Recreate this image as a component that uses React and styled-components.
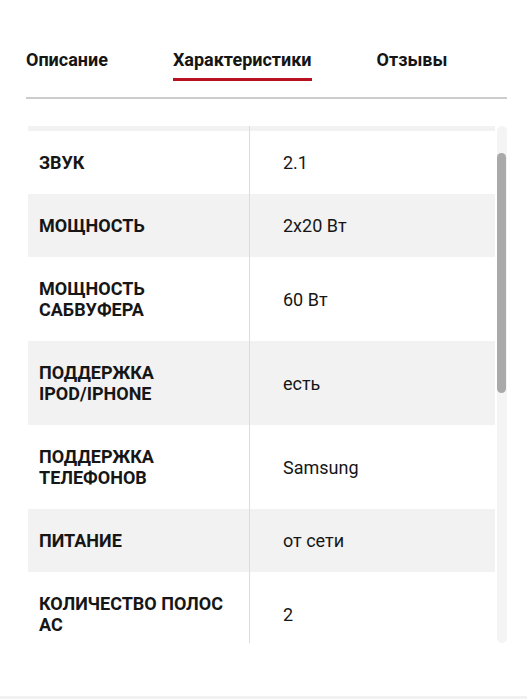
import React, { useEffect, useRef, useState } from "react";
import styled, { createGlobalStyle } from "styled-components";

const GlobalStyle = createGlobalStyle`
  html, body {
    margin: 0;
    padding: 0;
    background: #fff;
  }
  body {
    font-family: Roboto, "Liberation Sans", Arial, sans-serif;
    color: #161616;
  }
`;

const Page = styled.div`
  width: 527px;
  height: 699px;
  display: flex;
  flex-direction: column;
  overflow: hidden;
`;

const Content = styled.div`
  flex: 1;
  padding: 49px 20px 0 26px;
`;

const Tabs = styled.div`
  display: flex;
  gap: 65px;
  border-bottom: 2px solid #cccccc;
  padding-bottom: 16px;
`;

const Tab = styled.div`
  font-size: 18px;
  font-weight: 700;
  line-height: 21px;
  padding-bottom: 8px;
  border-bottom: 3px solid ${(p) => (p.$active ? "#b8111f" : "transparent")};
  color: #151515;
`;

const Body = styled.div`
  margin: 27px 0 0 2px;
  height: 517px;
  display: flex;
  gap: 2px;
`;

const Scroller = styled.div`
  flex: 1;
  overflow-y: scroll;
  scrollbar-width: none;
  &::-webkit-scrollbar {
    display: none;
  }
`;

const Track = styled.div`
  width: 10px;
  background: #f4f4f4;
  border-radius: 5px;
  display: flex;
  flex-direction: column;
`;

const Thumb = styled.div`
  width: 9px;
  background: #a9a9a9;
  border-radius: 5px;
`;

const Table = styled.div`
  display: flex;
  flex-direction: column;
`;

const Row = styled.div`
  display: grid;
  grid-template-columns: 222px 1fr;
  background: ${(p) => (p.$shaded ? "#f2f2f2" : "#ffffff")};
`;

const Label = styled.div`
  padding: 21px 18px 21px 11px;
  font-size: 18px;
  font-weight: 700;
  line-height: 21px;
  text-transform: uppercase;
  border-right: 1px solid #dcdcdc;
  display: flex;
  align-items: center;
`;

const Value = styled.div`
  padding: 21px 20px 21px 33px;
  font-size: 18px;
  line-height: 21px;
  display: flex;
  align-items: center;
`;

const Footer = styled.div`
  height: 3px;
  background: #f2f2f2;
`;

const specs = [
  ["Тип", "активная"],
  ["Звук", "2.1"],
  ["Мощность", "2x20 Вт"],
  ["Мощность сабвуфера", "60 Вт"],
  ["Поддержка iPod/iPhone", "есть"],
  ["Поддержка телефонов", "Samsung"],
  ["Питание", "от сети"],
  ["Количество полос АС", "2"],
  ["Bluetooth", "есть"],
  ["Пульт ДУ", "есть"],
  ["Разъем USB", "есть"],
  ["Радио", "FM"],
  ["Материал корпуса", "дерево"],
  ["Цвет", "черный"],
  ["Размеры сабвуфера", "200x250x300 мм"],
  ["Гарантия", "12 мес."],
];

export default function App() {
  const scroller = useRef(null);
  const [thumb, setThumb] = useState({ top: 27, height: 245 });

  const measure = () => {
    const el = scroller.current;
    if (!el) return;
    const track = el.clientHeight;
    setThumb({
      top: (el.scrollTop / el.scrollHeight) * track,
      height: (el.clientHeight / el.scrollHeight) * track,
    });
  };

  useEffect(() => {
    if (scroller.current) scroller.current.scrollTop = 58;
    measure();
  }, []);

  return (
    <Page>
      <GlobalStyle />
      <Content>
        <Tabs>
          <Tab>Описание</Tab>
          <Tab $active>Характеристики</Tab>
          <Tab>Отзывы</Tab>
        </Tabs>
        <Body>
          <Scroller ref={scroller} onScroll={measure}>
            <Table>
              {specs.map(([name, value], i) => (
                <Row key={name} $shaded={i % 2 === 0}>
                  <Label>{name}</Label>
                  <Value>{value}</Value>
                </Row>
              ))}
            </Table>
          </Scroller>
          <Track>
            <Thumb style={{ marginTop: thumb.top, height: thumb.height }} />
          </Track>
        </Body>
      </Content>
      <Footer />
    </Page>
  );
}
